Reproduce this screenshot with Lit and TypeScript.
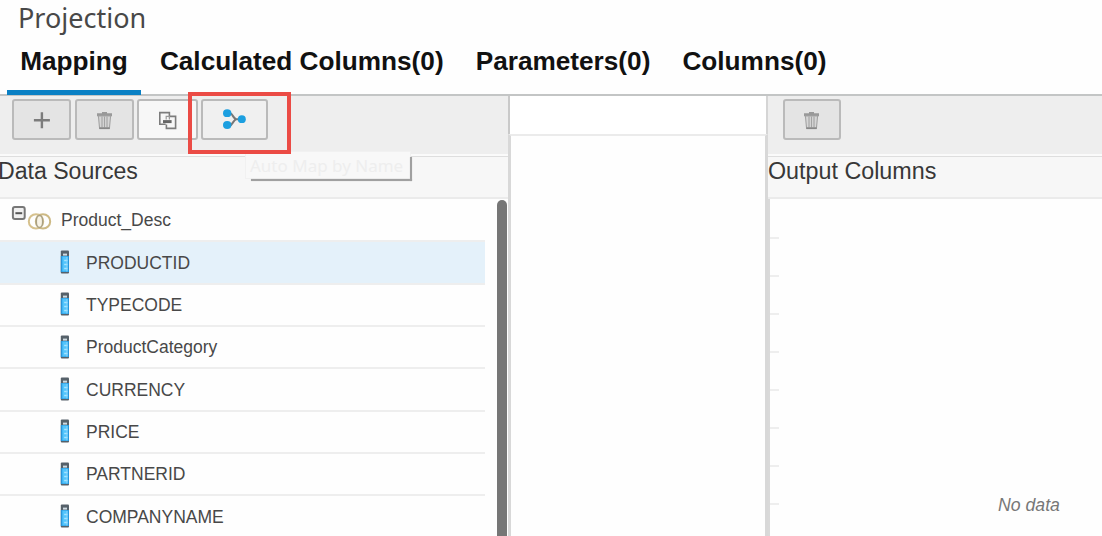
import { LitElement, html, css, svg } from "lit";
import { customElement, property } from "lit/decorators.js";

const icons: Record<string, unknown> = {
  plus: svg`<path d="M19.9 13.2V29.2M11.9 21.2H27.9" stroke="#7c7c7c" stroke-width="2.4" fill="none"/>`,
  trash: svg`<path d="M12 14.2h15v3H12zM17 13h5v2h-5z" fill="#999"/>
    <path d="M13.4 17h12.2l-1.2 12.4h-9.8z" fill="#d6d6d6" stroke="#a3a3a3" stroke-width="1.1"/>
    <path d="M17 17.5v11M19.5 17.5v11M22 17.5v11" stroke="#a3a3a3" stroke-width="1.1"/>
    <path d="M14.4 29.2h10.2" stroke="#888" stroke-width="1.8"/>`,
  copy: svg`<path d="M17.6 25.2H11.8V13.6H21.4V17.4H27.6V29.4H18.4V25.6" stroke="#7c7c7c" stroke-width="1.6" fill="none"/>
    <path d="M18.2 20.4V17.4H21.4V20.4" stroke="#999" stroke-width="1.2" fill="none"/>
    <path d="M15 22.6h8.6" stroke="#666" stroke-width="3"/>`,
  merge: svg`<path d="M12.2 14.3h3.2c1.8 0 3.4 5.9 6 5.9h5M12.2 26.2h3.2c1.8 0 3.4-6 6-6" stroke="#777" stroke-width="2" fill="none"/>
    <ellipse cx="12.2" cy="14.2" rx="4.2" ry="3.9" fill="#1c9fe0"/>
    <ellipse cx="12.2" cy="26" rx="4.2" ry="3.9" fill="#1c9fe0"/>
    <ellipse cx="26.8" cy="20.2" rx="4" ry="3.9" fill="#1c9fe0"/>`,
};

@customElement("tool-button")
class ToolButton extends LitElement {
  @property() icon = "plus";
  static styles = css`
    :host { display: block; box-sizing: border-box; height: 41px;
      border: 2px solid #bababa; border-radius: 3px; background: #e4e4e4; }
    .face { display: flex; height: 100%; align-items: center; justify-content: center; }
    svg { display: block; width: 40px; height: 41px; flex: none; }
  `;
  render() {
    return html`<div class="face"><svg viewBox="0 0 40 41">${icons[this.icon]}</svg></div>`;
  }
}

@customElement("app-root")
class AppRoot extends LitElement {
  tabs = ["Mapping", "Calculated Columns(0)", "Parameters(0)", "Columns(0)"];
  columns = ["PRODUCTID", "TYPECODE", "ProductCategory", "CURRENCY", "PRICE", "PARTNERID", "COMPANYNAME"];

  static styles = css`
    :host { display: flex; flex-direction: column; position: relative; width: 1102px; height: 536px;
      overflow: hidden; background: #fefefe; color: #333;
      font-family: "Liberation Sans", Arial, sans-serif; }
    * { box-sizing: border-box; }
    .top { height: 96px; flex: none; border-bottom: 2px solid #c3c5c5; }
    .title { height: 37px; padding-left: 18px; font: 27px/35px "Noto Sans", sans-serif; color: #484848; white-space: nowrap; }
    .tabs { display: flex; gap: 5.7px; padding-left: 7px; height: 58px; }
    .tab { padding: 0 13.2px; height: 58px; font-size: 26.2px; line-height: 49px; font-weight: bold; color: #111; white-space: nowrap; }
    .tab.active { border-bottom: 5px solid #0a80c4; width: 134px; }
    .main { display: flex; flex: 1; min-height: 0; }
    .left { width: 508px; display: flex; flex-direction: column; }
    .tools { height: 60px; flex: none; display: flex; background: #eee; border-bottom: 2px solid #fafafa; padding: 3px 0 0 12px; }
    .b1 { width: 59px; margin-right: 4px; }
    .b2 { width: 59px; margin-right: 3px; }
    .b3 { width: 61px; margin-right: 3px; background: #f7f7f7; }
    .b4 { width: 67px; background: #f0f0f0; }
    .head { height: 43px; flex: none; background: #f7f7f7; border-top: 1px solid #dedede; border-bottom: 2px solid #ebebeb;
      font-size: 23.3px; line-height: 28px; color: #383838; white-space: nowrap; }
    .src { font-size: 23.1px; display: flex; }
    .src span { margin-left: -2px; }
    .body { flex: 1; display: flex; min-height: 0; }
    .list { width: 485px; flex: none; overflow: hidden; padding-top: 1px; }
    .row { display: flex; align-items: center; height: 42.35px; border-bottom: 2px solid #eee; font-size: 17.5px; color: #484848; white-space: nowrap; }
    .row.sel { background: #e4f1fa; }
    .row span { padding-top: 1px; }
    .colicon { width: 10px; height: 24px; margin: -1px 16px 0 60px; }
    .rootnode svg { width: 44px; height: 28px; margin: -2px 7px 0 10px; }
    .rootnode span { padding-top: 0; }
    .scroll { width: 10px; margin-left: 12px; margin-top: 1px; background: #767676; border-radius: 5px 5px 0 0; }
    .middle { width: 260px; display: flex; flex-direction: column; }
    .midtop { height: 38px; flex: none; border-left: 2px solid #c9c9c9; border-right: 2px solid #d5d5d5; background: #fff; }
    .midbox { flex: 1; border: 3px solid #d8d8d8; border-top: 2px solid #ebebeb; border-bottom: 0; }
    .right { width: 334px; display: flex; flex-direction: column; }
    .right .tools { padding-left: 15px; }
    .b5 { width: 58px; }
    .out { flex: 1; display: flex; border-left: 2px solid #d9d9d9; min-height: 0; }
    .ticks { width: 9px; flex: none; padding-top: 2px; overflow: hidden; }
    .tick { height: 38px; border-bottom: 2px solid #eee; }
    .empty { margin: 294px 0 0 219px; font-size: 17.7px; line-height: 24px; font-style: italic; color: #777; white-space: nowrap; }
    .mark { position: absolute; left: 188px; top: 92px; width: 103px; height: 62px; border: 4px solid #eb4b45; }
    .tip { position: absolute; left: 245px; top: 151px; width: 166px; height: 28px; background: #f8f8f8; border: 1px solid #f1f1f1;
      padding-left: 4px; font: 17px/28px "Noto Sans", sans-serif; color: #eee; white-space: nowrap; }
    .shade-b { position: absolute; left: 251px; top: 179px; width: 161px; height: 2px; background: #a0a0a0; box-shadow: 0 0 1px #bbb; }
    .shade-r { position: absolute; left: 410px; top: 157px; width: 2px; height: 24px; background: #a0a0a0; box-shadow: 0 0 1px #bbb; }
  `;

  render() {
    return html`
      <div class="top">
        <div class="title">Projection</div>
        <div class="tabs">${this.tabs.map((t, i) => html`<div class="tab ${i ? "" : "active"}">${t}</div>`)}</div>
      </div>
      <div class="main">
        <div class="left">
          <div class="tools">
            <tool-button class="b1" icon="plus"></tool-button>
            <tool-button class="b2" icon="trash"></tool-button>
            <tool-button class="b3" icon="copy"></tool-button>
            <tool-button class="b4" icon="merge"></tool-button>
          </div>
          <div class="head src"><span>Data Sources</span></div>
          <div class="body">
            <div class="list">
              <div class="row rootnode">
                <svg viewBox="0 0 44 28">
                  <rect x="2.9" y="2" width="11.8" height="12" rx="2" fill="#f0f0f0" stroke="#777" stroke-width="2"/>
                  <path d="M5.4 8.2h6.8" stroke="#555" stroke-width="2"/>
                  <ellipse cx="26" cy="16.4" rx="7.2" ry="7.2" fill="none" stroke="#d6c18d" stroke-width="2"/>
                  <ellipse cx="33" cy="16.4" rx="7.2" ry="7.2" fill="none" stroke="#cdb984" stroke-width="2"/>
                  <ellipse cx="29.5" cy="16.4" rx="3.2" ry="6" fill="#f8f3e6" stroke="#a9a083" stroke-width="1.5"/>
                </svg>
                <span>Product_Desc</span>
              </div>
              ${this.columns.map((c, i) => html`
                <div class="row ${i ? "" : "sel"}">
                  <svg class="colicon" viewBox="0 0 10 24">
                    <rect x=".8" y=".6" width="8.2" height="22.8" rx="1" fill="#56616a"/>
                    <rect x=".8" y="6" width="8.2" height="16" fill="#2795da"/>
                    <rect x="2.3" y="6.5" width="5.2" height="15" fill="#52c4fc"/>
                    <path d="M3 4.6h4" stroke="#cfdbe2" stroke-width="2"/>
                    <path d="M4.2 10.5h3.3M4.2 14.5h3.3M4.2 18.5h3.3" stroke="#a9e4ff" stroke-width="1.3"/>
                    <path d="M7 7v14.5" stroke="#8bd9ff" stroke-width="1"/>
                  </svg>
                  <span>${c}</span>
                </div>`)}
            </div>
            <div class="scroll"></div>
          </div>
        </div>
        <div class="middle"><div class="midtop"></div><div class="midbox"></div></div>
        <div class="right">
          <div class="tools"><tool-button class="b5" icon="trash"></tool-button></div>
          <div class="head">Output Columns</div>
          <div class="out">
            <div class="ticks">${Array.from({ length: 8 }, () => html`<div class="tick"></div>`)}</div>
            <div class="empty">No data</div>
          </div>
        </div>
      </div>
      <div class="tip">Auto Map by Name</div>
      <div class="shade-b"></div>
      <div class="shade-r"></div>
      <div class="mark"></div>
    `;
  }
}
